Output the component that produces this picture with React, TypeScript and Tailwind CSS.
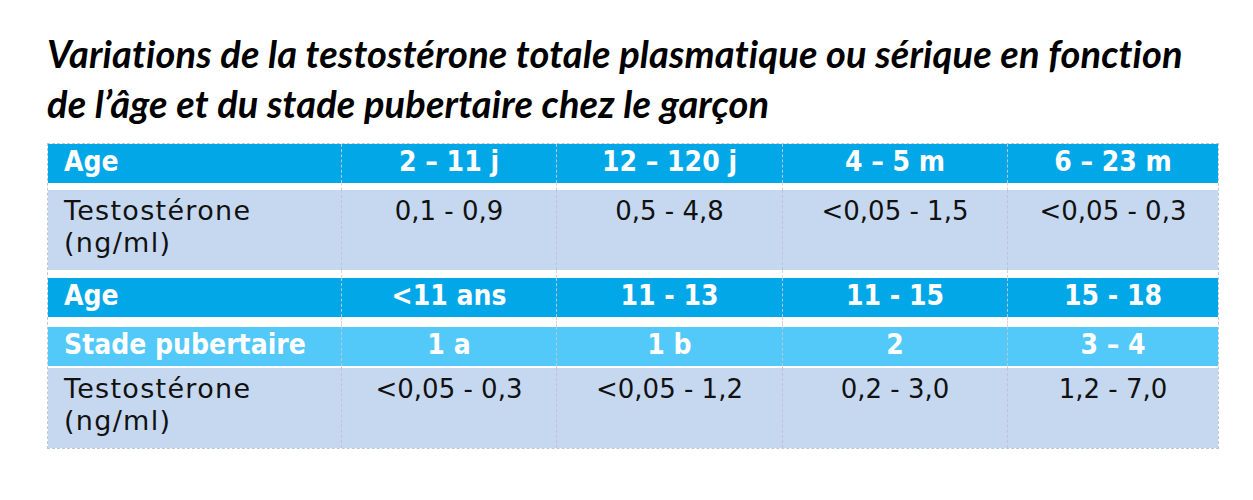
const cols = "grid grid-cols-[293px_215px_226px_225px_211px]";

type Row = { kind: "head" | "stage" | "body"; cells: string[] };

const rows: (Row | number)[] = [
  { kind: "head", cells: ["Age", "2 – 11 j", "12 – 120 j", "4 – 5 m", "6 – 23 m"] },
  7,
  { kind: "body", cells: ["Testostérone\n(ng/ml)", "0,1 - 0,9", "0,5 - 4,8", "<0,05 - 1,5", "<0,05 - 0,3"] },
  8,
  { kind: "head", cells: ["Age", "<11 ans", "11 - 13", "11 - 15", "15 - 18"] },
  10,
  { kind: "stage", cells: ["Stade pubertaire", "1 a", "1 b", "2", "3 – 4"] },
  2,
  { kind: "body", cells: ["Testostérone\n(ng/ml)", "<0,05 - 0,3", "<0,05 - 1,2", "0,2 - 3,0", "1,2 - 7,0"] },
];

function TableRow({ row }: { row: Row }) {
  const bg =
    row.kind === "head" ? "bg-[#02a7e8]" : row.kind === "stage" ? "bg-[#52c9f8]" : "bg-[#c6d8ef]";
  const height = row.kind === "body" ? "h-[80px]" : "h-[39px]";
  return (
    <div className={`${cols} ${bg} ${height}`}>
      {row.cells.map((c, i) => {
        const text =
          row.kind === "body"
            ? i === 0
              ? "text-[27px] tracking-[1.3px] leading-[32px] text-[#111] pt-[5px]"
              : "text-[26px] leading-[32px] text-[#111] pt-[5px]"
            : "text-[28px] leading-[36px] font-bold text-white";
        return (
          <div
            key={i}
            className={`${text} whitespace-pre-line ${
              i === 0 ? "pl-[16px] text-left" : "text-center border-l border-dashed border-[#b9c6d6]"
            }`}
            style={
              row.kind === "body"
                ? { fontFamily: "'DejaVu Sans', sans-serif" }
                : { fontFamily: "'DejaVu Sans Condensed', 'DejaVu Sans', sans-serif", fontStretch: "condensed" }
            }
          >
            {c}
          </div>
        );
      })}
    </div>
  );
}

export default function App() {
  return (
    <div className="min-h-[500px] w-[1253px] bg-white pl-[47px] pt-[28px]">
      <h1
        className="text-[38px] leading-[50px] font-bold italic tracking-[0.15px] text-black"
        style={{ fontFamily: "Lato, 'Open Sans', sans-serif" }}
      >
        Variations de la testostérone totale plasmatique ou sérique en fonction
        <br />
        de l’âge et du stade pubertaire chez le garçon
      </h1>
      <div className="mt-[15px] w-[1172px] border border-dashed border-[#bfc8d2]">
        {rows.map((r, i) =>
          typeof r === "number" ? (
            <div key={i} className={cols} style={{ height: r }}>
              {[0, 1, 2, 3, 4].map((k) => (
                <div key={k} className={k === 0 ? "" : "border-l border-dashed border-[#cfd6de]"} />
              ))}
            </div>
          ) : (
            <TableRow key={i} row={r} />
          )
        )}
      </div>
    </div>
  );
}
